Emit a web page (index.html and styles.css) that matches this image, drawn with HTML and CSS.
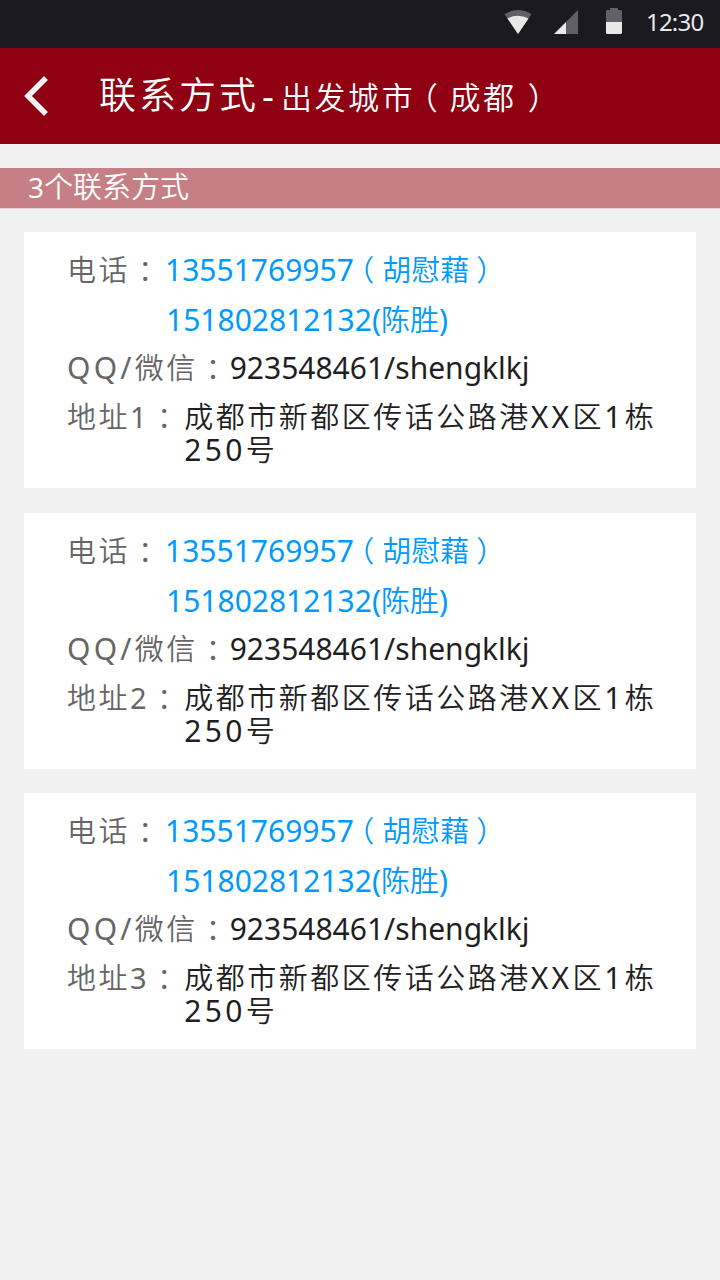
FILE: index.html
```
<!DOCTYPE html>
<html lang="zh-CN">
<head>
  <meta charset="UTF-8">
  <meta name="viewport" content="width=device-width, initial-scale=1.0">
  <title>联系方式</title>
  <link rel="stylesheet" href="styles.css">
</head>
<body>
  <div class="status">
    <svg class="wifi" width="28" height="25" viewBox="0 0 28 25">
      <path fill="#616066" d="M.5 5Q14-3 27.500 5L14 25z"/>
      <path fill="#e8e8e8" d="M3.500 9.500Q14 4 24.500 9.500L14 25z"/>
    </svg>
    <svg class="signal" width="24" height="24" viewBox="0 0 24 24">
      <path fill="#616066" d="M24 0v24H12V12z"/>
      <path fill="#e8e8e8" d="M12 12v12H0z"/>
    </svg>
    <svg class="battery" width="16" height="26" viewBox="0 0 16 26">
      <path fill="#616066" d="M4 0h8v2h3l1 1v11H0V3l1-1h3z"/>
      <path fill="#e8e8e8" d="M0 14h16v11l-1 1H1l-1-1z"/>
    </svg>
    <span class="time">12:30</span>
  </div>

  <div class="header">
    <svg class="back" width="26" height="42" viewBox="0 0 26 42">
      <path fill="none" stroke="#f8f2f6" stroke-width="5.500" d="M23 3L5 21l18 18"/>
    </svg>
    <h1 class="title">联系方式<span class="dash">-</span><span class="city">出发城市<span class="open">（</span>成都<span class="close">）</span></span></h1>
  </div>

  <div class="count"><span class="num">3</span>个联系方式</div>

  <div class="list">
    <div class="card">
      <div class="row phone">
        <span class="label">电话<span class="colon">：</span></span>
        <a class="tel">13551769957<span class="name"><span class="open">（</span>胡慰藉<span class="close">）</span></span></a>
      </div>
      <div class="row phone second">
        <a class="tel">151802812132(<span class="name">陈胜</span>)</a>
      </div>
      <div class="row qq">
        <span class="label"><span class="latin">QQ/</span>微信<span class="colon">：</span></span>
        <span class="account">923548461/shengklkj</span>
      </div>
      <div class="row address">
        <span class="label">地址<span class="index">1</span><span class="colon">：</span></span>
        <p class="text">成都市新都区传话公路港<span class="en">XX</span>区<span class="en">1</span>栋<br><span class="en">250</span>号</p>
      </div>
    </div>

    <div class="card">
      <div class="row phone">
        <span class="label">电话<span class="colon">：</span></span>
        <a class="tel">13551769957<span class="name"><span class="open">（</span>胡慰藉<span class="close">）</span></span></a>
      </div>
      <div class="row phone second">
        <a class="tel">151802812132(<span class="name">陈胜</span>)</a>
      </div>
      <div class="row qq">
        <span class="label"><span class="latin">QQ/</span>微信<span class="colon">：</span></span>
        <span class="account">923548461/shengklkj</span>
      </div>
      <div class="row address">
        <span class="label">地址<span class="index">2</span><span class="colon">：</span></span>
        <p class="text">成都市新都区传话公路港<span class="en">XX</span>区<span class="en">1</span>栋<br><span class="en">250</span>号</p>
      </div>
    </div>

    <div class="card">
      <div class="row phone">
        <span class="label">电话<span class="colon">：</span></span>
        <a class="tel">13551769957<span class="name"><span class="open">（</span>胡慰藉<span class="close">）</span></span></a>
      </div>
      <div class="row phone second">
        <a class="tel">151802812132(<span class="name">陈胜</span>)</a>
      </div>
      <div class="row qq">
        <span class="label"><span class="latin">QQ/</span>微信<span class="colon">：</span></span>
        <span class="account">923548461/shengklkj</span>
      </div>
      <div class="row address">
        <span class="label">地址<span class="index">3</span><span class="colon">：</span></span>
        <p class="text">成都市新都区传话公路港<span class="en">XX</span>区<span class="en">1</span>栋<br><span class="en">250</span>号</p>
      </div>
    </div>
  </div>
</body>
</html>
```
FILE: styles.css
```
* {
  padding: 0;
  margin: 0;
  box-sizing: border-box;
}
body {
  min-height: 1280px;
  font-family: "Noto Sans", "Noto Sans CJK SC", sans-serif;
  font-weight: 350;
  font-size: 29px;
  background: #F1F1F1;
}
.status {
  display: flex;
  align-items: flex-start;
  height: 48px;
  padding: 0 16px 0 504px;
  background: #1B1A20;
}
.status svg {
  flex: none;
}
.wifi {
  margin-top: 9px;
}
.signal {
  margin: 10px 0 0 22px;
}
.battery {
  margin: 8px 0 0 28px;
}
.time {
  margin-left: 24px;
  line-height: 43px;
  font-size: 24px;
  font-weight: 400;
  letter-spacing: -0.8px;
  color: #E8E8E8;
}
.header {
  display: flex;
  height: 96px;
  padding-left: 23px;
  background: #8F0012;
  color: #FFF;
}
.back {
  margin-top: 27px;
}
.title {
  margin-left: 50px;
  line-height: 94px;
  font-size: 37px;
  font-weight: 350;
  letter-spacing: 3px;
  white-space: nowrap;
}
.dash {
  margin: 0 4px 0 3px;
  font-weight: 400;
}
.city {
  font-size: 31px;
  letter-spacing: 2.6px;
}
.open,
.close,
.colon {
  font-feature-settings: "halt";
}
.open {
  margin: 0 8px 0 6px;
}
.close {
  margin: 0 7px;
}
.city .open {
  margin: 0 9px 0 7px;
}
.city .close {
  margin-left: 11px;
}
.colon {
  margin: 0 6px 0 8px;
}
.count {
  height: 40px;
  margin-top: 24px;
  padding-left: 28px;
  line-height: 38px;
  background: #C77F86;
  box-shadow: 0 1px #E3CED0;
  color: #FFF;
}
.num {
  font-size: 28px;
  font-weight: 400;
}
.list {
  display: flex;
  flex-direction: column;
  gap: 24.5px;
  padding: 24px;
}
.card {
  height: 256px;
  padding: 14px 0 0 43px;
  background: #FFF;
}
.row {
  display: flex;
  height: 48px;
  line-height: 48px;
  white-space: nowrap;
}
.phone {
  height: 50px;
}
.second {
  padding-left: 99px;
}
.qq {
  line-height: 44px;
}
.label {
  color: #666;
  letter-spacing: 2.5px;
}
.latin,
.index {
  font-weight: 400;
}
.latin {
  font-size: 30px;
  letter-spacing: 3.2px;
}
.tel {
  margin-left: 4px;
  font-size: 30px;
  font-weight: 400;
  color: #0099FF;
}
.second .tel {
  margin-left: 0;
}
.name {
  font-size: 29px;
  font-weight: 350;
}
.account {
  margin-left: 1px;
  font-size: 30px;
  font-weight: 400;
  color: #1F1F1F;
}
.address {
  line-height: 33px;
  padding-top: 6px;
}
.text {
  margin-left: 4px;
  color: #1F1F1F;
  letter-spacing: 2.5px;
}
.en {
  font-size: 30px;
  font-weight: 400;
  letter-spacing: 3.4px;
}
```
